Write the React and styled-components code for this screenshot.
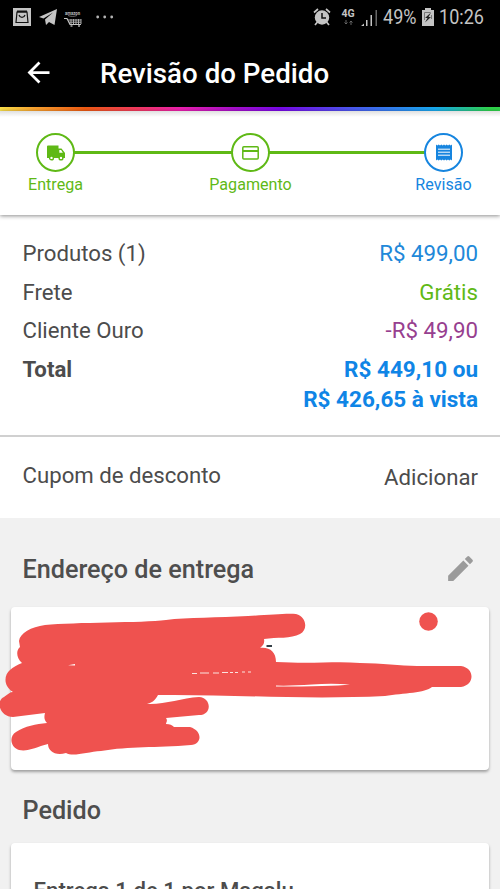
import React from "react";
import styled, { createGlobalStyle } from "styled-components";
import { MdArrowBack, MdEdit } from "react-icons/md";

const GREEN = "#5fb916";
const BLUE = "#0f85e6";

const GlobalStyle = createGlobalStyle`
  * {
    box-sizing: border-box;
  }
  body {
    margin: 0;
    background: #f1f1f1;
    color: #4c4c4c;
    font-family: Roboto, "Liberation Sans", sans-serif;
  }
`;

const Screen = styled.div`
  width: 500px;
  height: 889px;
  overflow: hidden;
  display: flex;
  flex-direction: column;
`;

const StatusBar = styled.div`
  height: 34px;
  flex: none;
  padding: 0 16px 0 13px;
  display: flex;
  align-items: center;
  justify-content: space-between;
  background: #000;
  color: #c4c4c4;
`;

const StatusGroup = styled.div`
  display: flex;
  align-items: center;
  gap: ${(props) => props.$gap}px;

  svg {
    display: block;
    flex: none;
  }
`;

const StatusText = styled.span`
  width: ${(props) => props.$width}px;
  font-size: 20.3px;
  line-height: 34px;
  white-space: nowrap;
  transform: scaleX(0.89);
  transform-origin: left center;
`;

const Network = styled.div`
  display: flex;
  flex-direction: column;
  align-items: center;
  gap: 1px;
  width: 14px;
  margin: 0 0 0 5px;
  font-size: 10.5px;
  font-weight: 700;
  line-height: 10px;
`;

const Header = styled.header`
  height: 73px;
  flex: none;
  padding: 0 22px;
  display: flex;
  align-items: center;
  background: #000;
  color: #fff;
`;

const HeaderTitle = styled.h1`
  margin: 6px 0 0 45px;
  font-size: 27.7px;
  font-weight: 500;
  line-height: 34px;
`;

const BackButton = styled.button`
  display: flex;
  margin-top: 3px;
  padding: 0;
  border: 0;
  background: none;
  color: inherit;
`;

const Rainbow = styled.div`
  height: 4px;
  flex: none;
  background: linear-gradient(
    90deg,
    #f9e04a 0%,
    #f8a12f 7%,
    #ee5a12 17%,
    #f23a5b 27%,
    #ec1fae 36%,
    #a50fcb 47%,
    #7808e8 56%,
    #4b55ee 70%,
    #17a9ee 87%,
    #2fd24a 98%
  );
`;

const Steps = styled.nav`
  height: 104px;
  flex: none;
  padding: 22px 26px 0;
  display: flex;
  align-items: flex-start;
  background: linear-gradient(#e0e0e0, #fff 6px);
  box-shadow: 0 1px 4px rgba(0, 0, 0, 0.45);
  z-index: 1;
`;

const StepItem = styled.div`
  width: 39px;
  margin-left: ${(props) => props.$left || 0}px;
  display: flex;
  flex-direction: column;
  align-items: center;
  color: ${(props) => props.$color};
`;

const StepCircle = styled.div`
  width: 39px;
  height: 39px;
  flex: none;
  display: flex;
  align-items: center;
  justify-content: center;
  border: 2px solid;
  border-radius: 50%;
`;

const StepLabel = styled.span`
  margin-top: 3px;
  font-size: 16.1px;
  line-height: 19px;
`;

const StepLine = styled.div`
  width: ${(props) => props.$width}px;
  height: 3px;
  flex: none;
  margin: 18px -1px 0;
  background: ${GREEN};
`;

const Summary = styled.section`
  height: 222px;
  flex: none;
  padding: 23px 22px 0 22.5px;
  background: #fff;
  border-bottom: 2px solid #d0d0d0;
`;

const Row = styled.div`
  display: flex;
  justify-content: space-between;
  margin-bottom: 8.5px;
  font-size: 22.2px;
  font-weight: ${(props) => (props.$bold ? 700 : 400)};
  line-height: 30px;
`;

const Amount = styled.span`
  color: ${(props) => props.$color};
  font-size: ${(props) => (props.$bold ? 22.5 : 22.3)}px;
  text-align: right;
  white-space: pre-line;
`;

const Coupon = styled.section`
  height: 81px;
  flex: none;
  padding: 23px 22px 0 22.5px;
  display: flex;
  justify-content: space-between;
  background: #fff;
  font-size: 22.2px;
  line-height: 30px;
`;

const AddLink = styled.span`
  margin-top: 2px;
`;

const SectionHeader = styled.div`
  height: ${(props) => props.$height}px;
  flex: none;
  padding: ${(props) => props.$top}px 23px 0 22.5px;
  display: flex;
  align-items: flex-start;
  justify-content: space-between;
  color: #4e4e4e;

  svg {
    margin-top: -2px;
    color: #9b9b9b;
  }
`;

const SectionTitle = styled.h2`
  margin: 0;
  font-size: 25.2px;
  font-weight: 500;
  line-height: 32px;
`;

const Card = styled.section`
  height: ${(props) => props.$height}px;
  flex: none;
  margin: 0 11px;
  border-radius: 4px;
  background: #fff;
  box-shadow: 0 2px 3px rgba(0, 0, 0, 0.34);
`;

const Scribble = styled.svg`
  display: block;
  width: 500px;
  height: 163px;
  margin-left: -11px;
`;

const DeliveryTitle = styled.h3`
  margin: 0;
  padding: 32px 22px 0 22.5px;
  font-size: 22.2px;
  font-weight: 500;
  line-height: 30px;
`;

const BagIcon = () => (
  <svg width="18" height="18" viewBox="0 0 18 18">
    <rect width="18" height="18" fill="#c4c4c4" />
    <path d="M4 4h10l1 10.500H3z" fill="none" stroke="#111" strokeWidth="1.2" />
    <path d="M4 3.500h10" stroke="#111" strokeWidth="2" />
    <path d="M6 7c1 3.200 5 3.200 6 0" fill="none" stroke="#111" strokeWidth="1.2" />
  </svg>
);

const PlaneIcon = () => (
  <svg width="18" height="17" viewBox="0 0 18 17">
    <path d="M0 8 18 0l-2.500 16-5.500-3-3 3-1-5.500 8-7-9.500 6z" fill="#c4c4c4" />
  </svg>
);

const AmazonIcon = () => (
  <svg width="18" height="20" viewBox="0 0 18 20">
    <text
      x="1"
      y="7.500"
      fontSize="5.500"
      fontWeight="700"
      textLength="15"
      lengthAdjust="spacingAndGlyphs"
      fill="#bbb"
    >
      amazon
    </text>
    <path d="M4 8.500c3 1.200 6 1.200 9 0" fill="none" stroke="#999" strokeWidth=".7" />
    <path d="M0 11.500h3l3 6h11" fill="none" stroke="#c4c4c4" strokeWidth="1.2" />
    <path
      d="M4 13h13M5 15.200h12M7 12v5M9.500 12v5M12 12v5M14.500 12v5M17 12v5"
      stroke="#aaa"
    />
    <path d="M6.500 19h2M14 19h2" stroke="#aaa" strokeWidth="1.4" />
  </svg>
);

const MoreDots = styled((props) => (
  <svg {...props} width="18" height="4" viewBox="0 0 18 4" fill="#b4b4b4">
    <circle cx="1.700" cy="2" r="1.400" />
    <circle cx="8.700" cy="2" r="1.400" />
    <circle cx="15.700" cy="2" r="1.400" />
  </svg>
))`
  margin-left: 6px;
`;

const AlarmIcon = () => (
  <svg width="18" height="18" viewBox="0 0 18 18">
    <circle cx="9" cy="9.500" r="7.200" fill="#c4c4c4" />
    <path
      d="M1 4.500l4-3.500M17 4.500l-4-3.500M4.500 14l-2.500 3M13.500 14l2.500 3"
      stroke="#c4c4c4"
      strokeWidth="1.700"
    />
    <path d="M9 5v5h4" fill="none" stroke="#111" strokeWidth="1.500" />
  </svg>
);

const DataArrows = () => (
  <svg width="9" height="5" viewBox="0 0 9 5" stroke="#656565">
    <path d="M2 0v4M.5 2.500 2 4l1.500-1.500M7 5V1M5.500 2.500 7 1l1.500 1.500" fill="none" />
  </svg>
);

const SignalIcon = () => (
  <svg width="17" height="17" viewBox="0 0 17 17" fill="#c4c4c4">
    <path d="M0 17l3-2.500V17zM5 11h1.500v6H5zM9.500 6h1.500v11H9.500z" />
    <path d="M14.500 1H16v16h-1.500z" fill="#666" />
  </svg>
);

const BatteryIcon = () => (
  <svg width="12" height="18" viewBox="0 0 12 18">
    <path d="M3 0h6v2h3v16H0V2h3z" fill="#c4c4c4" />
    <path d="M2.500 12V4.500h6M9.500 7v4" fill="none" stroke="#777" />
    <path d="M9 4.500 3 10h2.500L3 14.500 9 9H6.500z" fill="#222" />
  </svg>
);

const TruckIcon = () => (
  <svg width="18" height="16" viewBox="0 0 18 16">
    <path
      d="M1 0.500h10.500v3h3L18 8v5H0V1.500q0-1 1-1z"
      fill="currentColor"
    />
    <path d="M12.300 5h1.800l1.800 2.800h-3.600z" fill="#fff" />
    <g fill="#fff" stroke="currentColor" strokeWidth="1.400">
      <circle cx="4.500" cy="12.900" r="1.900" />
      <circle cx="14" cy="12.900" r="1.900" />
    </g>
  </svg>
);

const CardIcon = () => (
  <svg width="17" height="14" viewBox="0 0 17 14" fill="none" stroke="currentColor">
    <rect x="0.800" y="0.800" width="15.400" height="12.200" rx="1" strokeWidth="1.500" />
    <path d="M1 5h15" strokeWidth="2" />
  </svg>
);

const ReceiptIcon = () => (
  <svg width="16" height="17" viewBox="0 0 16 17">
    <path
      d="M0 .5l1.300 1L2.700.5 4 1.500 5.300.5 6.700 1.500 8 .5l1.300 1 1.400-1 1.300 1 1.300-1 1.400 1L16 .5v16l-1.300-1-1.400 1-1.300-1-1.300 1-1.400-1-1.300 1-1.300-1-1.400 1-1.300-1-1.300 1-1.400-1-1.300 1z"
      fill="currentColor"
    />
    <path d="M2 5.200h12M2 8.200h12M2 11.200h12" stroke="#fff" strokeWidth="1" />
  </svg>
);

// Marker strokes hiding the customer's address
const AddressScribble = () => (
  <Scribble viewBox="0 607 500 163">
    <path
      fill="#ef524f"
      d="M19 641C20 633 31 627 45 625C75 622 142 623 166 620C187 617 219 618 248 616C268 615 287 613 296 614C307 617 308 630 300 634C291 639 277 637 264 639C265 644 262 646 260 648C270 647 276 652 276 662C314 664 336 661 360 663C382 663 400 666 417 666H461C475 668 475 685 461 687H432C425 693 404 693 385 696C301 700 224 694 158 695C155 701 151 703 147 704C164 705 181 698 199 697C212 698 212 715 199 715L166 718C168 721 166 722 166 724C170 724 172 725 174 727H190C203 731 202 744 191 745C155 748 130 746 101 751C87 752 73 757 66 753C55 756 48 751 48 744C36 747 28 752 19 750C10 747 9 736 16 732C25 726 36 724 47 723C44 720 44 717 45 713L13 717C0 717-5 701 4 697C8 694 10 692 13 692C3 686 4 675 10 670C13 667 17 665 22 663C16 658 16 650 20 647Z"
    />
    <circle cx="428.500" cy="621.500" r="9.300" fill="#ef524f" />
    <path
      d="M68 665.200L75 664V665.500ZM276 685.500Q290 686 312 684.500Q331 683 350 684.500Q331 686.500 276 686.500Z"
      fill="#fff"
    />
    <path
      d="M192 673.500h5M200 673h9M213 673h6M222 672.500h6M230 672.500h3M235 672.500h3M242 672h3M248 672h3"
      stroke="#fae3e0"
      strokeWidth="1.200"
    />
    <path d="M266.500 646h5.500" stroke="#354047" strokeWidth="2" />
  </Scribble>
);

const products = [
  { label: "Produtos (1)", value: "R$ 499,00", color: "#2188d9" },
  { label: "Frete", value: "Grátis", color: GREEN },
  { label: "Cliente Ouro", value: "-R$ 49,90", color: "#97408f" },
  { label: "Total", value: "R$ 449,10 ou\nR$ 426,65 à vista", color: BLUE, bold: true },
];

export default function App() {
  return (
    <Screen>
      <GlobalStyle />
      <StatusBar>
        <StatusGroup $gap={7.5}>
          <BagIcon />
          <PlaneIcon />
          <AmazonIcon />
          <MoreDots />
        </StatusGroup>
        <StatusGroup $gap={5.5}>
          <AlarmIcon />
          <Network>
            4G
            <DataArrows />
          </Network>
          <SignalIcon />
          <StatusText $width={33}>49%</StatusText>
          <BatteryIcon />
          <StatusText $width={45}>10:26</StatusText>
        </StatusGroup>
      </StatusBar>

      <Header>
        <BackButton aria-label="Voltar">
          <MdArrowBack size={33} />
        </BackButton>
        <HeaderTitle>Revisão do Pedido</HeaderTitle>
      </Header>
      <Rainbow />

      <Steps>
        <StepItem $color={GREEN} $left={10}>
          <StepCircle><TruckIcon /></StepCircle>
          <StepLabel>Entrega</StepLabel>
        </StepItem>
        <StepLine $width={158} />
        <StepItem $color={GREEN}>
          <StepCircle><CardIcon /></StepCircle>
          <StepLabel>Pagamento</StepLabel>
        </StepItem>
        <StepLine $width={156} />
        <StepItem $color="#1685df">
          <StepCircle><ReceiptIcon /></StepCircle>
          <StepLabel>Revisão</StepLabel>
        </StepItem>
      </Steps>

      <Summary>
        {products.map((item) => (
          <Row key={item.label} $bold={item.bold}>
            <span>{item.label}</span>
            <Amount $color={item.color} $bold={item.bold}>{item.value}</Amount>
          </Row>
        ))}
      </Summary>
      <Coupon>
        <span>Cupom de desconto</span>
        <AddLink>Adicionar</AddLink>
      </Coupon>

      <SectionHeader $height={89} $top={36}>
        <SectionTitle>Endereço de entrega</SectionTitle>
        <MdEdit size={33} />
      </SectionHeader>
      <Card $height={163}>
        <AddressScribble />
      </Card>

      <SectionHeader $height={73} $top={25}>
        <SectionTitle>Pedido</SectionTitle>
      </SectionHeader>
      <Card $height={100}>
        <DeliveryTitle>Entrega 1 de 1 por Magalu</DeliveryTitle>
      </Card>
    </Screen>
  );
}
